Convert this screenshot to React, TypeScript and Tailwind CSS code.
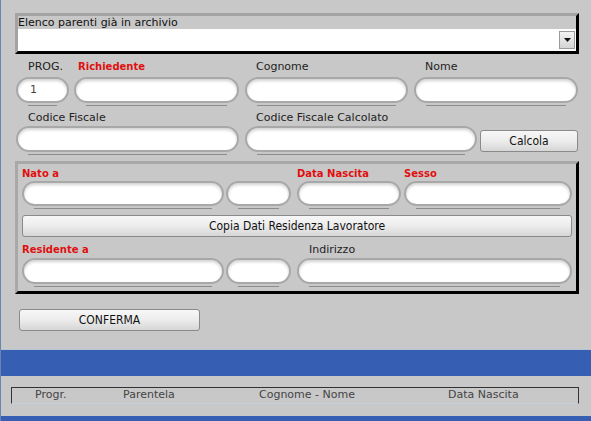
import React from 'react'

const font = { fontFamily: '"DejaVu Sans", Verdana, sans-serif' }
const btnFont = { fontFamily: '"DejaVu Sans Condensed", Tahoma, sans-serif' }

function Field({ w, h = 26, value, ml = 0 }: { w: number; h?: number; value?: string; ml?: number }) {
  return (
    <div className="flex flex-col shrink-0" style={{ width: w, marginLeft: ml }}>
      <div
        className="rounded-full border-2 border-[#a8a8a8] bg-white shadow-[inset_0_2px_3px_rgba(0,0,0,0.18)] flex items-center px-[12px] text-[11px] text-[#444]"
        style={{ height: h }}
      >
        {value}
      </div>
      <div className="mx-[12px] mt-[2px] h-[1px] bg-[#8c8c8c]" />
    </div>
  )
}

function Label({ children, red, w, pl = 0 }: { children?: React.ReactNode; red?: boolean; w: number; pl?: number }) {
  return (
    <div
      className={
        'shrink-0 leading-[12px] whitespace-nowrap ' +
        (red ? 'text-[10px] text-[#e01010] font-bold' : 'text-[11px] text-[#222]')
      }
      style={{ width: w, paddingLeft: pl }}
    >
      {children}
    </div>
  )
}

function Button({ children, className }: { children: React.ReactNode; className?: string }) {
  return (
    <div
      className={
        'flex items-center justify-center shrink-0 rounded-[3px] border border-[#8a8a8a] bg-gradient-to-b from-[#f7f7f7] via-[#ececec] to-[#d6d6d6] text-[12px] text-[#111] ' +
        (className ?? '')
      }
      style={btnFont}
    >
      {children}
    </div>
  )
}

export default function App() {
  return (
    <div
      className="w-[591px] h-[421px] bg-[#c8c8c8] border-l border-[#6d84b3] flex flex-col overflow-hidden"
      style={font}
    >
      {/* archivio */}
      <div className="ml-[14px] mt-[13px] w-[564px] h-[41px] border-t-[3px] border-l-[3px] border-[#a3a3a3] border-r-[3px] border-r-black border-b-[3px] border-b-black flex flex-col">
        <div className="text-[11px] leading-[13px] text-[#111]">Elenco parenti già in archivio</div>
        <div className="flex-1 bg-white flex justify-end items-center pr-[1px]">
          <div className="w-[16px] h-[18px] border border-[#9a9a9a] bg-gradient-to-b from-[#f4f4f4] to-[#d4d4d4] flex items-center justify-center">
            <svg width="7" height="4" viewBox="0 0 7 4">
              <path d="M0 0h7L3.5 4z" fill="#111" />
            </svg>
          </div>
        </div>
      </div>

      {/* row 1 */}
      <div className="flex ml-[15px] mt-[7px]">
        <Label w={58} pl={12}>PROG.</Label>
        <Label w={171} pl={4} red>Richiedente</Label>
        <Label w={169} pl={11}>Cognome</Label>
        <Label w={164} pl={11}>Nome</Label>
      </div>
      <div className="flex ml-[15px] mt-[4px]">
        <Field w={53} value="1" />
        <Field w={165} ml={5} />
        <Field w={163} ml={6} />
        <Field w={164} ml={6} />
      </div>

      {/* row 2 */}
      <div className="flex ml-[15px] mt-[6px]">
        <Label w={229} pl={12}>Codice Fiscale</Label>
        <Label w={232} pl={11}>Codice Fiscale Calcolato</Label>
      </div>
      <div className="flex ml-[15px] mt-[2px]">
        <Field w={223} />
        <Field w={232} ml={6} />
        <Button className="w-[98px] h-[22px] mt-[4px] ml-[3px]">Calcola</Button>
      </div>

      {/* nascita / residenza */}
      <div className="ml-[14px] mt-[6px] w-[564px] h-[133px] border-t-[3px] border-l-[3px] border-[#a8a8a8] border-r-[3px] border-r-black border-b-[3px] border-b-black flex flex-col pl-[4px] pt-[4px]">
        <div className="flex">
          <Label w={275} red>Nato a</Label>
          <Label w={107} red>Data Nascita</Label>
          <Label w={150} red>Sesso</Label>
        </div>
        <div className="flex mt-[1px]">
          <Field w={202} h={25} />
          <Field w={65} h={25} ml={2} />
          <Field w={104} h={25} ml={6} />
          <Field w={168} h={25} ml={3} />
        </div>
        <Button className="mt-[6px] w-[550px] h-[22px]">Copia Dati Residenza Lavoratore</Button>
        <div className="flex mt-[7px]">
          <Label w={287} red>Residente a</Label>
          <Label w={150}>Indirizzo</Label>
        </div>
        <div className="flex mt-[2px]">
          <Field w={202} />
          <Field w={65} ml={2} />
          <Field w={275} ml={6} />
        </div>
      </div>

      <Button className="ml-[18px] mt-[15px] w-[181px] h-[22px]">CONFERMA</Button>

      <div className="mt-[18px] border-t border-[#b4c4d4] h-[27px] bg-[#365fb4]" />

      <div className="flex-1 pt-[11px]">
        <div className="ml-[10px] w-[568px] h-[17px] border-t border-l border-r border-[#333] border-b border-b-[#c0d0dc] flex items-center text-[11px] text-[#444]">
          <div className="w-[111px] pl-[23px]">Progr.</div>
          <div className="w-[136px]">Parentela</div>
          <div className="w-[189px]">Cognome - Nome</div>
          <div>Data Nascita</div>
        </div>
      </div>
      <div className="h-[5px] bg-[#365fb4]" />
    </div>
  )
}
